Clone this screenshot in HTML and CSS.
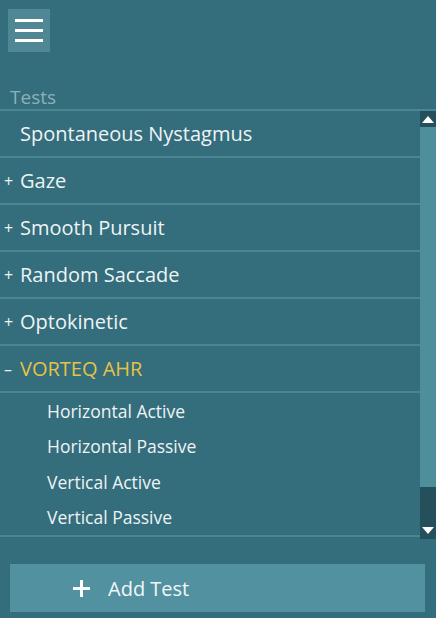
FILE: index.html
```html
<!DOCTYPE html>
<html lang="en">
<head>
  <meta charset="UTF-8">
  <title>Tests</title>
  <meta name="viewport" content="width=device-width, initial-scale=1.0">
  <link rel="stylesheet" href="styles.css">
</head>
<body>
  <div class="topbar">
    <button class="menu-btn" aria-label="Menu">
      <span></span><span></span><span></span>
    </button>
  </div>

  <div class="section-label">Tests</div>

  <div class="list-wrap">
    <ul class="test-list">
      <li class="row"><span class="toggle"></span>Spontaneous Nystagmus</li>
      <li class="row"><span class="toggle">+</span>Gaze</li>
      <li class="row"><span class="toggle">+</span>Smooth Pursuit</li>
      <li class="row"><span class="toggle">+</span>Random Saccade</li>
      <li class="row"><span class="toggle">+</span>Optokinetic</li>
      <li class="row open"><span class="toggle">–</span>VORTEQ AHR</li>
      <li class="group">
        <div class="sub">Horizontal Active</div>
        <div class="sub">Horizontal Passive</div>
        <div class="sub">Vertical Active</div>
        <div class="sub">Vertical Passive</div>
      </li>
    </ul>

    <!-- scrollbar -->
    <div class="scrollbar">
      <div class="arrow up"></div>
      <div class="track"></div>
      <div class="thumb"></div>
      <div class="arrow down"></div>
    </div>
  </div>

  <button class="add-btn"><span class="plus"></span>Add Test</button>
</body>
</html>
```

FILE: styles.css
```css
body {
  margin: 0;
  background-color: #346d7b;
  color: #eef4f5;
  font-family: 'Open Sans', sans-serif;
  width: 436px;
  height: 618px;
  overflow: hidden;
}

.topbar {
  padding: 9px 0 0 8px;
  height: 43px;
}

.menu-btn {
  width: 42px;
  height: 43px;
  border: none;
  padding: 0;
  background: #4f8795;
  display: flex;
  flex-direction: column;
  justify-content: center;
  align-items: center;
  gap: 7px;
}

.menu-btn span {
  display: block;
  width: 28px;
  height: 3px;
  background: #ffffff;
}

.section-label {
  margin-top: 33px;
  padding-left: 10px;
  font-size: 19px;
  line-height: 24px;
  color: #8db1ba;
}

.list-wrap {
  display: flex;
  border-top: 2px solid #4b8592;
  height: 428px;
}

.test-list {
  flex: 1;
  list-style: none;
  margin: 0;
  padding: 0;
}

.row {
  height: 45px;
  border-bottom: 2px solid #4b8592;
  display: flex;
  align-items: center;
  font-size: 20px;
}

.toggle {
  width: 20px;
  padding-left: 4px;
  box-sizing: border-box;
  font-size: 16px;
}

.row.open {
  color: #e5c349;
}

.row.open .toggle {
  color: #eef4f5;
}

.group {
  border-bottom: 2px solid #4b8592;
}

.sub {
  height: 35.5px;
  display: flex;
  align-items: center;
  padding-left: 47px;
  font-size: 17.5px;
}

.scrollbar {
  width: 16px;
  display: flex;
  flex-direction: column;
  background: #4f8f9b;
}

.track {
  flex: 1;
}

.thumb {
  height: 36px;
  background: #25505b;
}

.arrow {
  height: 16px;
  background: #25505b;
  position: relative;
}

.arrow::after {
  content: "";
  position: absolute;
  left: 2px;
  border-left: 6px solid transparent;
  border-right: 6px solid transparent;
}

.arrow.up::after {
  top: 5px;
  border-bottom: 7px solid #ffffff;
}

.arrow.down::after {
  top: 4px;
  border-top: 7px solid #ffffff;
}

.add-btn {
  display: flex;
  align-items: center;
  margin: 25px 0 0 10px;
  width: 415px;
  height: 48px;
  border: none;
  background: #5291a0;
  color: #f2f7f8;
  font-family: 'Open Sans', sans-serif;
  font-size: 20px;
  padding: 0 0 0 63px;
}

.plus {
  position: relative;
  width: 17px;
  height: 17px;
  margin-right: 18px;
}

.plus::before,
.plus::after {
  content: "";
  position: absolute;
  background: #ffffff;
}

.plus::before {
  left: 0;
  top: 7px;
  width: 17px;
  height: 3px;
}

.plus::after {
  left: 7px;
  top: 0;
  width: 3px;
  height: 17px;
}
```
